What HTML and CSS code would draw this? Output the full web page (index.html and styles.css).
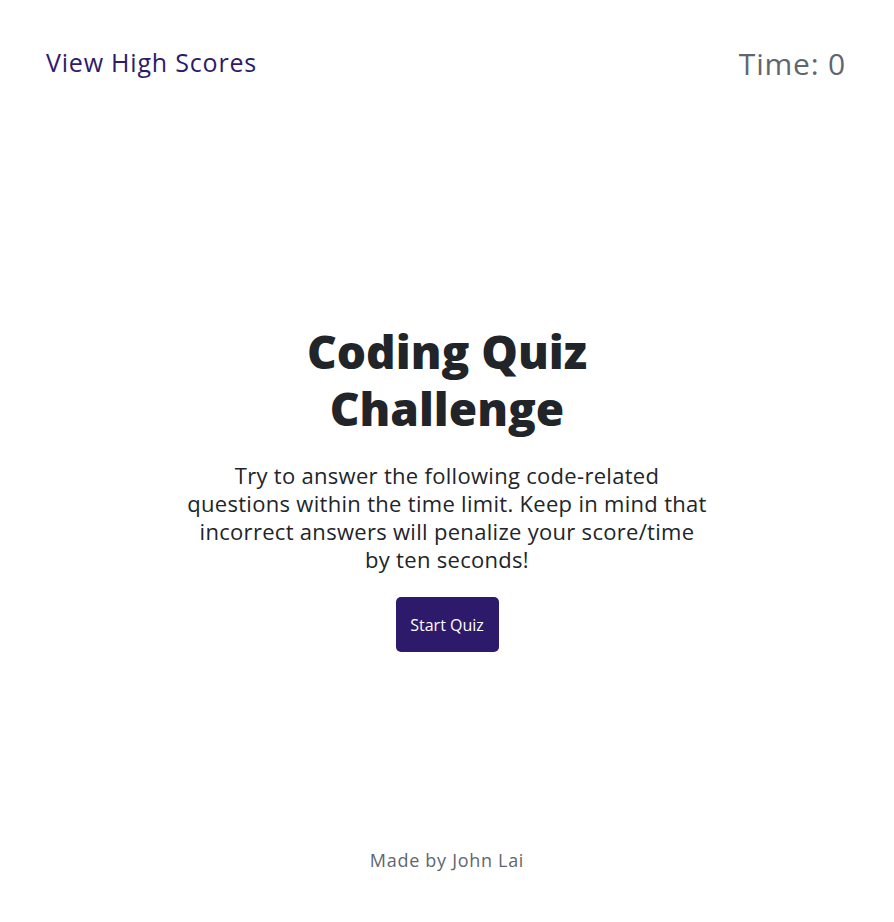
FILE: index.html
```html
<!DOCTYPE html>
<html lang="en">
<head>
<meta charset="utf-8">
<title>Coding Quiz Challenge</title>
<link rel="stylesheet" href="styles.css">
</head>
<body>
<div class="page">
  <header class="topbar">
    <a class="scores-link" href="#">View High Scores</a>
    <div class="timer">Time: <span>0</span></div>
  </header>
  <main class="intro">
    <h1 class="title">Coding Quiz Challenge</h1>
    <p class="lead">Try to answer the following code-related questions within the time limit. Keep in mind that incorrect answers will penalize your score/time by ten seconds!</p>
    <button class="start-btn" type="button">Start Quiz</button>
  </main>
  <footer class="footer">Made by John Lai</footer>
</div>
</body>
</html>
```

FILE: styles.css
```css
* { box-sizing: border-box; }
html, body { margin: 0; padding: 0; }
body {
  font-family: "Open Sans", Lato, sans-serif;
  color: #212529;
  background: #ffffff;
}
.page {
  min-height: 100vh;
  display: flex;
  flex-direction: column;
}
.topbar {
  display: flex;
  justify-content: space-between;
  align-items: flex-start;
  padding: 44px 48px 0 46px;
}
.scores-link {
  color: #2e1a6b;
  text-decoration: none;
  font-size: 25px;
  letter-spacing: 0.8px;
  line-height: 36px;
}
.timer {
  color: #5f6670;
  font-size: 30px;
  letter-spacing: 0.8px;
  line-height: 40px;
}
.intro {
  flex: 1;
  display: flex;
  flex-direction: column;
  align-items: center;
  padding-top: 239px;
  text-align: center;
}
.title {
  margin: 0;
  max-width: 340px;
  font-size: 46px;
  line-height: 57px;
  font-weight: 800;
}
.lead {
  margin: 24px 0 0;
  max-width: 522px;
  font-size: 22px;
  letter-spacing: 0.3px;
  line-height: 28px;
}
.start-btn {
  margin-top: 24px;
  width: 103px;
  height: 55px;
  background: #2e1a6b;
  color: #ffffff;
  border: none;
  border-radius: 5px;
  font-family: inherit;
  font-size: 16px;
}
.footer {
  text-align: center;
  color: #5f6670;
  font-size: 18px;
  letter-spacing: 0.7px;
  padding-bottom: 50px;
}
```
